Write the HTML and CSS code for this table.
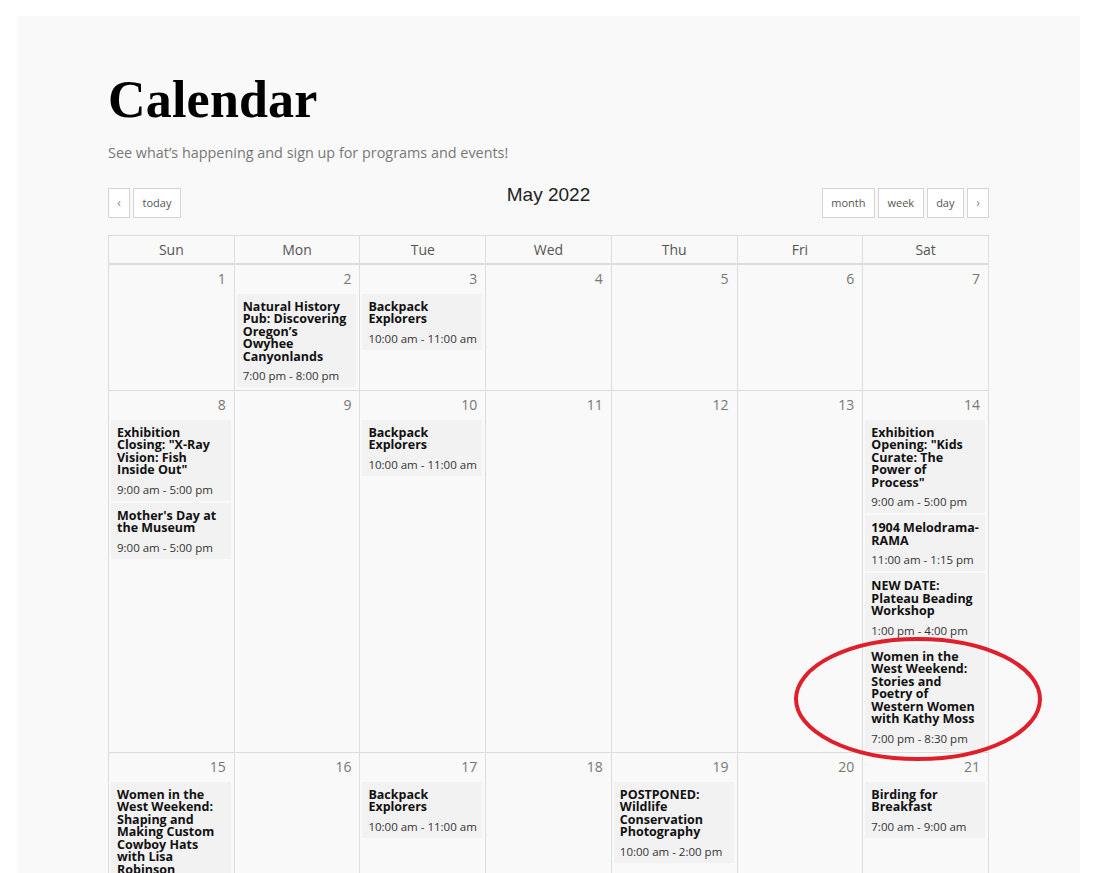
FILE: index.html
```html
<!DOCTYPE html>
<html lang="en">
<head>
<meta charset="utf-8">
<title>Calendar</title>
<link rel="stylesheet" href="styles.css">
</head>
<body>
<div class="panel">
  <h1 class="title">Calendar</h1>
  <p class="lead">See what’s happening and sign up for programs and events!</p>

  <div class="toolbar">
    <div class="group left">
      <button class="btn arrow">‹</button>
      <button class="btn">today</button>
    </div>
    <h2 class="month-title">May 2022</h2>
    <div class="group right">
      <button class="btn">month</button>
      <button class="btn">week</button>
      <button class="btn">day</button>
      <button class="btn arrow">›</button>
    </div>
  </div>

  <div class="cal">
    <div class="dow">
      <div class="dow-cell">Sun</div>
      <div class="dow-cell">Mon</div>
      <div class="dow-cell">Tue</div>
      <div class="dow-cell">Wed</div>
      <div class="dow-cell">Thu</div>
      <div class="dow-cell">Fri</div>
      <div class="dow-cell">Sat</div>
    </div>

    <div class="week first">
      <div class="day"><div class="num">1</div></div>
      <div class="day"><div class="num">2</div>
        <div class="event"><span class="ev-title">Natural History Pub: Discovering Oregon’s<br>Owyhee Canyonlands</span><span class="ev-time">7:00 pm - 8:00 pm</span></div>
      </div>
      <div class="day"><div class="num">3</div>
        <div class="event"><span class="ev-title">Backpack Explorers</span><span class="ev-time">10:00 am - 11:00 am</span></div>
      </div>
      <div class="day"><div class="num">4</div></div>
      <div class="day"><div class="num">5</div></div>
      <div class="day"><div class="num">6</div></div>
      <div class="day"><div class="num">7</div></div>
    </div>

    <div class="week">
      <div class="day"><div class="num">8</div>
        <div class="event"><span class="ev-title">Exhibition Closing: "X-Ray Vision: Fish Inside Out"</span><span class="ev-time">9:00 am - 5:00 pm</span></div>
        <div class="event"><span class="ev-title">Mother's Day at the Museum</span><span class="ev-time">9:00 am - 5:00 pm</span></div>
      </div>
      <div class="day"><div class="num">9</div></div>
      <div class="day"><div class="num">10</div>
        <div class="event"><span class="ev-title">Backpack Explorers</span><span class="ev-time">10:00 am - 11:00 am</span></div>
      </div>
      <div class="day"><div class="num">11</div></div>
      <div class="day"><div class="num">12</div></div>
      <div class="day"><div class="num">13</div></div>
      <div class="day"><div class="num">14</div>
        <div class="event"><span class="ev-title">Exhibition Opening: "Kids Curate: The Power of Process"</span><span class="ev-time">9:00 am - 5:00 pm</span></div>
        <div class="event"><span class="ev-title">1904 Melodrama-RAMA</span><span class="ev-time">11:00 am - 1:15 pm</span></div>
        <div class="event"><span class="ev-title">NEW DATE: Plateau Beading Workshop</span><span class="ev-time">1:00 pm - 4:00 pm</span></div>
        <div class="event"><span class="ev-title">Women in the West Weekend: Stories and Poetry of Western Women with Kathy Moss</span><span class="ev-time">7:00 pm - 8:30 pm</span></div>
      </div>
    </div>

    <div class="week">
      <div class="day"><div class="num">15</div>
        <div class="event"><span class="ev-title">Women in the West Weekend: Shaping and Making Custom Cowboy Hats with Lisa Robinson</span><span class="ev-time">10:00 am - 3:00 pm</span></div>
      </div>
      <div class="day"><div class="num">16</div></div>
      <div class="day"><div class="num">17</div>
        <div class="event"><span class="ev-title">Backpack Explorers</span><span class="ev-time">10:00 am - 11:00 am</span></div>
      </div>
      <div class="day"><div class="num">18</div></div>
      <div class="day"><div class="num">19</div>
        <div class="event"><span class="ev-title">POSTPONED: Wildlife Conservation Photography</span><span class="ev-time">10:00 am - 2:00 pm</span></div>
      </div>
      <div class="day"><div class="num">20</div></div>
      <div class="day"><div class="num">21</div>
        <div class="event"><span class="ev-title">Birding for Breakfast</span><span class="ev-time">7:00 am - 9:00 am</span></div>
      </div>
    </div>
  </div>
</div>

<svg class="annotation" width="252" height="130" viewBox="0 0 252 130" aria-hidden="true">
  <ellipse cx="126" cy="64" rx="122" ry="60" fill="none" stroke="#e01f2b" stroke-width="4"/>
</svg>
</body>
</html>
```

FILE: styles.css
```css
* { box-sizing: border-box; }

html, body {
  margin: 0;
  padding: 0;
  background: #ffffff;
}

body {
  font-family: "Open Sans", "Liberation Sans", sans-serif;
  color: #333;
  position: relative;
  min-height: 873px;
  overflow: hidden;
}

.panel {
  margin: 16px 0 0 18px;
  width: 1062px;
  min-height: 900px;
  background: #f9f9f9;
  padding: 53px 91px 40px 90px;
}

.title {
  margin: 0;
  font-family: "Liberation Serif", "Times New Roman", serif;
  font-weight: 700;
  font-size: 52px;
  line-height: 1.2;
  color: #000;
  letter-spacing: 0.2px;
}

.lead {
  margin: 11px 0 0;
  font-size: 14.4px;
  line-height: 22.5px;
  color: #777;
}

.toolbar {
  margin-top: 23px;
  display: grid;
  grid-template-columns: 1fr auto 1fr;
  align-items: start;
  height: 30px;
}

.group {
  display: flex;
  gap: 3px;
}

.group.right { justify-content: flex-end; }

.btn {
  height: 30px;
  padding: 0 8.5px;
  border: 1px solid #d4d4d4;
  background: #fff;
  font-family: "Open Sans", "Liberation Sans", sans-serif;
  font-size: 11px;
  color: #555;
  line-height: 28px;
  cursor: pointer;
}

.btn.arrow {
  width: 22px;
  padding: 0;
  font-size: 12px;
  color: #888;
}

.month-title {
  margin: -4px 0 0;
  font-family: "Liberation Sans", Arial, sans-serif;
  font-weight: 400;
  font-size: 19px;
  line-height: 1.15;
  color: #222;
}

.cal {
  margin-top: 17px;
  width: 881px;
  border-left: 1px solid #ddd;
}

.dow,
.week {
  display: grid;
  grid-template-columns: repeat(7, 1fr);
}

.dow {
  border-top: 1px solid #ddd;
  border-bottom: 2px solid #ddd;
}

.dow-cell {
  border-right: 1px solid #ddd;
  text-align: center;
  font-size: 14px;
  line-height: 27px;
  color: #555;
}

.week {
  border-bottom: 1px solid #ddd;
}

.day {
  border-right: 1px solid #ddd;
  padding: 0 3px 0 2px;
  min-height: 124px;
}

.week.first .day { min-height: 125px; }

.num {
  text-align: right;
  padding: 4px 5px 0 0;
  font-size: 14px;
  line-height: 20px;
  color: #777;
  margin-bottom: 5px;
}

.event {
  background: #f2f2f2;
  padding: 7px 4px 3px 6px;
  margin-bottom: 2px;
}

.ev-title {
  display: block;
  font-weight: 700;
  font-size: 12.5px;
  line-height: 12.5px;
  color: #111;
}

.ev-time {
  display: block;
  margin-top: 5px;
  font-size: 11.5px;
  line-height: 16px;
  color: #333;
}

.annotation {
  position: absolute;
  left: 792px;
  top: 635px;
}
```
